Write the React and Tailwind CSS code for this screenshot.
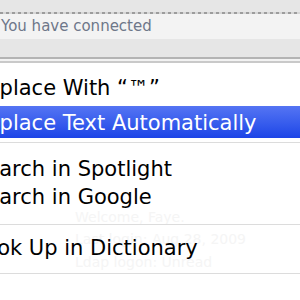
import React from "react";

const font = { fontFamily: '"DejaVu Sans", "Liberation Sans", sans-serif' };

function Item({ children, className = "" }) {
  return (
    <div className={"h-[28px] leading-[28px] text-[21px] whitespace-nowrap -ml-[27px] " + className}>
      {children}
    </div>
  );
}

export default function App() {
  return (
    <div className="w-[300px] h-[300px] overflow-hidden bg-white relative" style={font}>
      {/* top window strip */}
      <div className="h-[12px] bg-[#e6e6e6]" />
      <div className="h-[2px] bg-[repeating-linear-gradient(90deg,#9c9c9c_0_3px,#d6d6d6_3px_6px)]" />
      <div className="h-[25px] bg-[#f3f3f3] flex items-end pb-[4px]">
        <span className="text-[15px] leading-[18px] text-[#6e7789] pl-[1px] whitespace-nowrap">You have connected</span>
      </div>
      <div className="h-[18px] bg-[#e6e6e6]" />
      <div className="h-[2px] bg-[#b4b4b4]" />
      <div className="h-[2px] bg-[#f2f2f2]" />
      <div className="h-[2px] bg-[#c9c9c9]" />

      {/* menu */}
      <div className="relative bg-white text-black">
        <div className="absolute left-[75px] top-[145px] text-[14px] leading-[18px] text-[#f5f5f5] whitespace-nowrap">
          Welcome, Faye.
        </div>
        <div className="absolute left-[75px] top-[167px] text-[14px] leading-[18px] text-[#f5f5f5] whitespace-nowrap">
          Last login: Aug 28, 2009
        </div>
        <div className="absolute left-[75px] top-[190px] text-[14px] leading-[18px] text-[#f5f5f5] whitespace-nowrap">
          Ldap logon: Unread
        </div>

        <div className="relative pt-[11px]">
          <Item>Replace With “™”</Item>
          <div className="mt-[4px] h-[32px] pt-[3px] bg-linear-to-b from-[#5574f3] to-[#1d44e7]">
            <Item className="text-white">Replace Text Automatically</Item>
          </div>
          <div className="mt-[4px] h-[1px] bg-[#dcdcdc]" />
          <div className="mt-[12px]">
            <Item>Search in Spotlight</Item>
            <Item>Search in Google</Item>
          </div>
          <div className="mt-[13px] h-[1px] bg-[#dcdcdc]" />
          <div className="mt-[9px]">
            <Item>Look Up in Dictionary</Item>
          </div>
          <div className="mt-[11px] h-[1px] bg-[#dcdcdc]" />
          <div className="mt-[22px]">
            <Item>Substitutions</Item>
          </div>
        </div>
      </div>
    </div>
  );
}
